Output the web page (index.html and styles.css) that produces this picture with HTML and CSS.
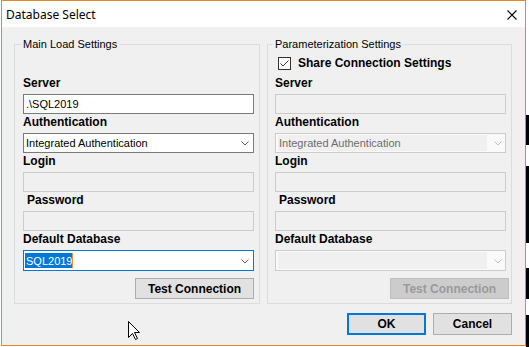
FILE: index.html
```html
<!DOCTYPE html>
<html lang="en">
<head>
    <meta charset="UTF-8">
    <title>Database Select</title>
    <link rel="stylesheet" href="styles.css">
</head>
<body>
    <div class="screen">
        <!-- Dialog window -->
        <div class="dialog">
            <div class="titlebar">
                <span class="title">Database Select</span>
                <svg class="close-icon" width="10" height="10" viewBox="0 0 10 10">
                    <path d="M0.5 0.5 L9.5 9.5 M9.5 0.5 L0.5 9.5" stroke="#000" stroke-width="1.1" fill="none"/>
                </svg>
            </div>

            <div class="client">
                <div class="groups">
                    <fieldset class="group group-main">
                        <legend>Main Load Settings</legend>
                        <div class="group-body">
                            <div class="check-row"></div>
                            <div class="fields">
                                <div class="field">
                                    <div class="field-label">Server</div>
                                    <div class="textbox">.\SQL2019</div>
                                </div>
                                <div class="field">
                                    <div class="field-label">Authentication</div>
                                    <div class="combo">
                                        <span class="combo-text">Integrated Authentication</span>
                                        <svg class="chevron" width="8" height="5" viewBox="0 0 8 5"><polyline points="0.5,0.5 4,4 7.5,0.5" fill="none" stroke="#606060" stroke-width="1"/></svg>
                                    </div>
                                </div>
                                <div class="field">
                                    <div class="field-label">Login</div>
                                    <div class="textbox disabled"></div>
                                </div>
                                <div class="field">
                                    <div class="field-label indented">Password</div>
                                    <div class="textbox disabled"></div>
                                </div>
                                <div class="field">
                                    <div class="field-label">Default Database</div>
                                    <div class="combo focused">
                                        <span class="combo-text"><span class="selection">SQL2019</span></span>
                                        <svg class="chevron" width="8" height="5" viewBox="0 0 8 5"><polyline points="0.5,0.5 4,4 7.5,0.5" fill="none" stroke="#606060" stroke-width="1"/></svg>
                                    </div>
                                </div>
                            </div>
                            <button class="btn test-btn">Test Connection</button>
                        </div>
                    </fieldset>

                    <fieldset class="group group-param">
                        <legend>Parameterization Settings</legend>
                        <div class="group-body">
                            <div class="check-row">
                                <span class="checkbox">
                                    <svg width="11" height="11" viewBox="0 0 11 11"><polyline points="1.5,5.5 4,8 9.5,2.5" fill="none" stroke="#333" stroke-width="1"/></svg>
                                </span>
                                <span class="check-label">Share Connection Settings</span>
                            </div>
                            <div class="fields">
                                <div class="field">
                                    <div class="field-label">Server</div>
                                    <div class="textbox disabled"></div>
                                </div>
                                <div class="field">
                                    <div class="field-label">Authentication</div>
                                    <div class="combo disabled">
                                        <span class="combo-text">Integrated Authentication</span>
                                        <svg class="chevron" width="8" height="5" viewBox="0 0 8 5"><polyline points="0.5,0.5 4,4 7.5,0.5" fill="none" stroke="#bfbfbf" stroke-width="1"/></svg>
                                    </div>
                                </div>
                                <div class="field">
                                    <div class="field-label">Login</div>
                                    <div class="textbox disabled"></div>
                                </div>
                                <div class="field">
                                    <div class="field-label indented">Password</div>
                                    <div class="textbox disabled"></div>
                                </div>
                                <div class="field">
                                    <div class="field-label">Default Database</div>
                                    <div class="combo disabled tall">
                                        <span class="combo-text"></span>
                                        <svg class="chevron" width="8" height="5" viewBox="0 0 8 5"><polyline points="0.5,0.5 4,4 7.5,0.5" fill="none" stroke="#bfbfbf" stroke-width="1"/></svg>
                                    </div>
                                </div>
                            </div>
                            <button class="btn test-btn test-btn-param" disabled>Test Connection</button>
                        </div>
                    </fieldset>
                </div>

                <div class="dialog-buttons">
                    <button class="btn btn-dialog btn-default">OK</button>
                    <button class="btn btn-dialog">Cancel</button>
                </div>
            </div>
        </div>

        <!-- whatever is behind the dialog -->
        <div class="backdrop-strip"></div>

        <svg class="cursor" width="13" height="20" viewBox="0 0 13 20">
            <path d="M0.5 0.5 L0.5 16.5 L4.5 12.5 L7.5 18.5 L9.5 17.5 L6.5 11.5 L11.5 11.5 Z" fill="#fff" stroke="#000" stroke-width="1"/>
        </svg>
    </div>
</body>
</html>
```

FILE: styles.css
```css
* {
    box-sizing: border-box;
}

body {
    margin: 0;
    background: #fff;
    width: 529px;
    height: 347px;
    overflow: hidden;
    font-family: "Liberation Sans", Arial, sans-serif;
    color: #000;
}

.screen {
    position: relative;
    display: flex;
    padding-left: 1px;
    height: 347px;
}

.dialog {
    width: 525px;
    height: 346px;
    border: 1px solid #e3892c;
    background: #f0f0f0;
    display: flex;
    flex-direction: column;
}

.titlebar {
    height: 26px;
    flex: none;
    background: #fff;
    display: flex;
    align-items: center;
    justify-content: space-between;
    padding: 0 8px 0 4px;
}

.title {
    font-family: "Noto Sans", sans-serif;
    font-size: 12px;
}

.close-icon {
    margin-top: 1px;
}

.client {
    flex: 1;
    padding: 11px 13px 0 12px;
    display: flex;
    flex-direction: column;
}

.groups {
    display: flex;
    gap: 7px;
}

.group {
    margin: 0;
    min-width: 0;
    width: 246px;
    border: 1px solid #dcdcdc;
    padding: 0 5px 4px 8px;
}

.group-param {
    width: 245px;
    padding-left: 7px;
}

.group legend {
    font-size: 11px;
    line-height: 13px;
    padding: 0 2px;
    margin-left: -2px;
}

.group-body {
    display: flex;
    flex-direction: column;
}

.check-row {
    height: 13px;
    margin-top: 6px;
    display: flex;
    align-items: center;
    gap: 7px;
    padding-left: 3px;
}

.checkbox {
    width: 13px;
    height: 13px;
    border: 1px solid #333;
    background: #fff;
    display: flex;
}

.check-label {
    font-weight: bold;
    font-size: 12px;
    line-height: 13px;
}

.fields {
    display: flex;
    flex-direction: column;
    gap: 1px;
    margin-top: 6px;
}

.field-label {
    font-weight: bold;
    font-size: 12px;
    line-height: 15px;
    height: 15px;
}

.field-label.indented {
    padding-left: 4px;
}

.textbox {
    margin-top: 3px;
    height: 20px;
    border: 1px solid #7a7a7a;
    background: #fff;
    font-size: 11px;
    line-height: 18px;
    padding-left: 2px;
}

.textbox.disabled {
    border-color: #cccccc;
    background: #f0f0f0;
}

.combo {
    margin-top: 3px;
    height: 20px;
    border: 1px solid #7a7a7a;
    background: #fff;
    display: flex;
    align-items: center;
    padding: 0 4px 0 2px;
    font-size: 11px;
}

.combo-text {
    flex: 1;
    line-height: 18px;
    white-space: nowrap;
}

.combo.focused {
    height: 21px;
    border-color: #0078d7;
    padding-left: 1px;
}

.selection {
    background: #0078d7;
    color: #fff;
    padding: 2px 0 1px 1px;
    border-right: 1px solid #f0901c;
}

.combo.disabled {
    border-color: #cccccc;
    background: #fafafa;
    padding: 1px 3px 1px 2px;
    color: #6d6d6d;
}

.combo.disabled .combo-text {
    align-self: stretch;
    background: #f0f0f0;
    margin-right: 7px;
    line-height: 16px;
    padding-left: 1px;
}

.combo.tall {
    height: 21px;
}

.chevron {
    flex: none;
    margin-top: 1px;
}

.btn {
    font-family: "Liberation Sans", Arial, sans-serif;
    font-weight: bold;
    font-size: 12px;
    color: #000;
    background: #e1e1e1;
    border: 1px solid #adadad;
    padding: 0;
    margin: 0;
}

.test-btn {
    align-self: flex-end;
    width: 119px;
    height: 21px;
    margin-top: 7px;
}

.test-btn-param {
    margin-right: -3px;
}

.btn:disabled {
    background: #cccccc;
    border-color: #bfbfbf;
    color: #9a9a9a;
}

.dialog-buttons {
    display: flex;
    justify-content: flex-end;
    gap: 7px;
    margin-top: 9px;
}

.btn-dialog {
    width: 79px;
    height: 22px;
}

.btn-default {
    border: 2px solid #0078d7;
}

.backdrop-strip {
    width: 3px;
    height: 347px;
    background: linear-gradient(to bottom,
        #fff 0 115px, #000 115px 145px, #fff 145px 166px, #000 166px 243px,
        #fff 243px 268px, #000 268px 299px, #fff 299px 315px, #000 315px 347px);
}

.cursor {
    position: absolute;
    left: 128px;
    top: 321px;
}
```
